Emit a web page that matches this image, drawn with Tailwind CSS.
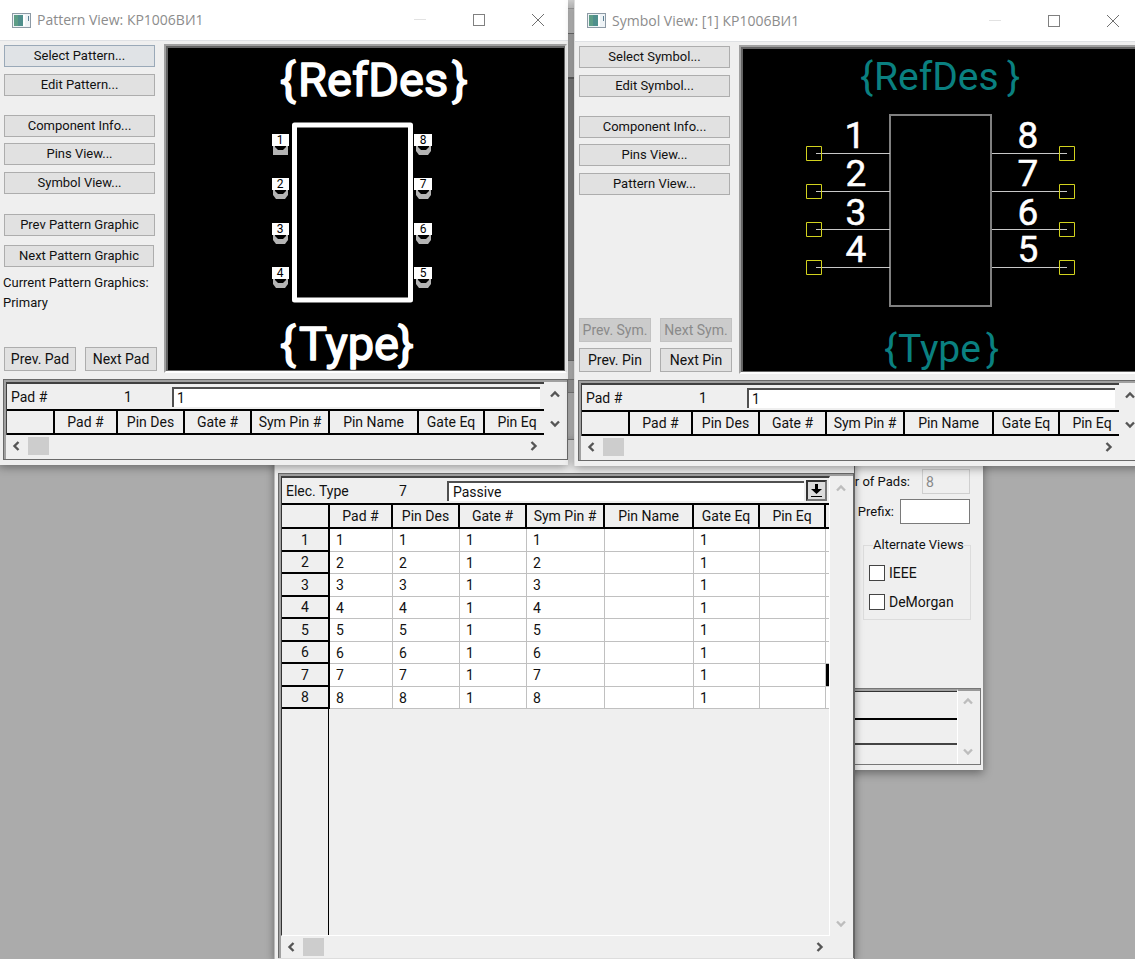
<!DOCTYPE html>
<html lang="en">
<head>
<meta charset="utf-8">
<title>Library Executive</title>
<script src="https://cdn.jsdelivr.net/npm/@tailwindcss/browser@4"></script>
</head>
<body class="relative h-screen overflow-hidden bg-[#ababab] font-['Roboto','Liberation_Sans',sans-serif] text-sm leading-5 text-[#111]">

<svg class="hidden" aria-hidden="true">
  <symbol id="up" viewBox="0 0 10 8"><path d="M1 6.500 5 2.500 9 6.500" fill="none" stroke="currentColor" stroke-width="2.400"/></symbol>
  <symbol id="down" viewBox="0 0 10 8"><path d="M1 1.500 5 5.500 9 1.500" fill="none" stroke="currentColor" stroke-width="2.400"/></symbol>
  <symbol id="left" viewBox="0 0 8 10"><path d="M6.500 1 2.500 5 6.500 9" fill="none" stroke="currentColor" stroke-width="2.400"/></symbol>
  <symbol id="right" viewBox="0 0 8 10"><path d="M1.500 1 5.500 5 1.500 9" fill="none" stroke="currentColor" stroke-width="2.400"/></symbol>
  <symbol id="app" viewBox="0 0 19 15">
    <rect x="0.500" y="0.500" width="18" height="14" fill="#eef3f6" stroke="#8d9aa5"/>
    <rect x="2" y="2" width="9" height="11" fill="#4f8f8c"/><rect x="2" y="2" width="4" height="11" fill="#5d9d86"/>
    <path d="M12 2v11" stroke="#fff" stroke-width="2"/><path d="M16.500 3v5" stroke="#5b7f93"/>
  </symbol>
  <symbol id="min" viewBox="0 0 12 12"><path d="M0 5.500h12" stroke="#e2e2e2"/></symbol>
  <symbol id="max" viewBox="0 0 12 12"><rect x="0.500" y="0.500" width="11" height="11" fill="none" stroke="#808080"/></symbol>
  <symbol id="close" viewBox="0 0 12 12"><path d="M0 0 12 12M12 0 0 12" stroke="#707070"/></symbol>
</svg>

<!-- Edge of the main window, seen between the two viewers -->
<div class="absolute left-[560px] top-0 flex h-[466px] w-5 flex-col bg-[#c8c8c8]">
  <div class="h-[9px] border-b border-[#b0b0b0] bg-[#dcdcdc]"></div>
  <div class="h-[25px] border-b border-[#777] bg-[#cfcfcf]"></div>
  <div class="h-[45px] border-b-2 border-[#666] bg-[#b8b8b8]"></div>
  <div class="h-[282px] border-b border-[#777] bg-[#8a8a8a]"></div>
  <div class="h-[19px] border-b border-[#888] bg-[#c6c6c6]"></div>
  <div class="h-[13px] border-b border-[#888] bg-[#aaa]"></div>
  <div class="h-[47px] border-b border-[#999] bg-[#c8c8c8]"></div>
  <div class="flex-1 bg-[#b4b4b4]"></div>
</div>

<!-- Component information -->
<section class="absolute left-[580px] top-[440px] w-[403px] bg-[#efefef] pb-[5px] pr-0.5 pt-[29px] shadow-[0_3px_9px_rgba(0,0,0,0.4)]">
  <div class="flex flex-col items-end gap-[5px] pr-[11px] text-[13px]">
    <div class="flex items-center gap-3"><label for="pads">Number of Pads:</label><input id="pads" disabled value="8" class="h-[25px] w-12 border border-[#cfcfcf] bg-[#efefef] px-[3px] text-sm text-[#888]"></div>
    <div class="flex items-center gap-1.5"><label for="prefix">RefDes Prefix:</label><input id="prefix" class="h-[25px] w-[70px] border border-[#7a7a7a] bg-white px-1"></div>
  </div>
  <fieldset class="ml-auto mr-2.5 mt-[11px] h-[85px] w-[108px] border border-[#dcdcdc] pl-[5px]">
    <legend class="ml-1 whitespace-nowrap text-[13px]">Alternate Views</legend>
    <div class="flex flex-col gap-[9px] pt-2">
      <label class="flex h-5 items-center gap-1"><input type="checkbox" class="size-4 appearance-none border border-[#444] bg-white">IEEE</label>
      <label class="flex h-5 items-center gap-1"><input type="checkbox" class="size-4 appearance-none border border-[#444] bg-white">DeMorgan</label>
    </div>
  </fieldset>
  <div class="mt-[68px] flex h-[77px] border border-[#777]">
    <div class="flex flex-1 flex-col border-t-2 border-[#a0a0a0]">
      <div class="h-[29px] border-b-2 border-t border-b-black border-t-[#333]"></div>
      <div class="h-[25px] border-b-2 border-[#444]"></div>
    </div>
    <div class="flex w-[23px] flex-col items-center justify-between border-l border-t-2 border-l-white border-t-[#999] pb-2 pr-0.5 pt-1.5 text-[#bdbdbd]">
      <svg class="h-2 w-2.5"><use href="#up"/></svg><svg class="h-2 w-2.5"><use href="#down"/></svg>
    </div>
  </div>
</section>

<!-- Pins view -->
<section class="absolute bottom-0 left-[274px] top-[440px] flex w-[581px] flex-col border-l border-r border-l-[#bbb] border-r-[#666] bg-[#efefef] pl-[3px] pt-[33px] shadow-[0_2px_8px_rgba(0,0,0,0.4)]">
  <div class="flex flex-1 border-l border-r border-t border-[#696969]">
    <div class="flex min-w-0 flex-1 border-l-2 border-t-2 border-[#a0a0a0]">
      <div class="flex min-w-0 flex-1 flex-col">
        <div class="flex min-h-0 flex-1 flex-col border-b border-l border-r border-t-2 border-b-white border-l-[#333] border-r-white border-t-[#404040]">
          <div class="flex h-[25px] items-center pl-1">
            <label for="etype" class="w-[113px]">Elec. Type</label><span class="w-12">7</span>
            <input id="etype" value="Passive" class="h-5 min-w-0 flex-1 border-l-2 border-t-2 border-[#505050] bg-white px-1">
            <button aria-label="Open list" class="ml-0.5 mr-0.5 flex size-[21px] items-center justify-center border-2 border-b-[#777] border-l-[#333] border-r-[#777] border-t-[#333] bg-[#dcdcdc]">
              <svg class="size-[15px]" viewBox="0 0 15 15"><path d="M6 1h3v5h4L7.500 11 2 6h4z" fill="#000"/><path d="M2 13.500h11" stroke="#000"/></svg>
            </button>
          </div>
          <div class="overflow-hidden">
          <table class="w-[622px] table-fixed border-separate border-spacing-0 text-left">
            <colgroup><col class="w-12"><col class="w-[63px]"><col class="w-[67px]"><col class="w-[67px]"><col class="w-[78px]"><col class="w-[89px]"><col class="w-[66px]"><col class="w-[66px]"><col class="w-[78px]"></colgroup>
            <thead class="text-center [&_th]:h-[26px] [&_th]:border-b-2 [&_th]:border-r-2 [&_th]:border-t-2 [&_th]:border-black [&_th]:p-0 [&_th]:font-normal">
              <tr><th></th><th>Pad #</th><th>Pin Des</th><th>Gate #</th><th>Sym Pin #</th><th>Pin Name</th><th>Gate Eq</th><th>Pin Eq</th><th></th></tr>
            </thead>
            <tbody class="[&_td]:border-b [&_td]:border-r [&_td]:border-[#c0c0c0] [&_td]:bg-white [&_td]:py-0 [&_td]:pl-1.5 [&_th]:border-b-2 [&_th]:border-r-2 [&_th]:border-black [&_th]:p-0 [&_th]:text-center [&_th]:font-normal [&_tr]:leading-[20px] [&_tr:nth-child(even)]:h-[22px] [&_tr:nth-child(odd)]:h-[23px]">
              <tr><th>1</th><td>1</td><td>1</td><td>1</td><td>1</td><td></td><td>1</td><td></td><td></td></tr>
              <tr><th>2</th><td>2</td><td>2</td><td>1</td><td>2</td><td></td><td>1</td><td></td><td></td></tr>
              <tr><th>3</th><td>3</td><td>3</td><td>1</td><td>3</td><td></td><td>1</td><td></td><td></td></tr>
              <tr><th>4</th><td>4</td><td>4</td><td>1</td><td>4</td><td></td><td>1</td><td></td><td></td></tr>
              <tr><th>5</th><td>5</td><td>5</td><td>1</td><td>5</td><td></td><td>1</td><td></td><td></td></tr>
              <tr><th>6</th><td>6</td><td>6</td><td>1</td><td>6</td><td></td><td>1</td><td></td><td></td></tr>
              <tr><th>7</th><td>7</td><td>7</td><td>1</td><td>7</td><td></td><td>1</td><td></td><td class="bg-black!"></td></tr>
              <tr><th>8</th><td>8</td><td>8</td><td>1</td><td>8</td><td></td><td>1</td><td></td><td></td></tr>
            </tbody>
          </table>
          </div>
          <div class="w-[47px] flex-1 border-r border-black"></div>
        </div>
        <div class="flex h-[22px] items-center justify-between pl-1.5 pr-1.5 text-[#555]">
          <div class="flex items-center gap-2"><svg class="h-2.5 w-2"><use href="#left"/></svg><div class="h-[18px] w-[21px] bg-[#cdcdcd]"></div></div>
          <svg class="h-2.5 w-2"><use href="#right"/></svg>
        </div>
      </div>
      <div class="flex w-[23px] flex-col items-center justify-between pb-[30px] pt-2 pr-0.5 text-[#bdbdbd]">
        <svg class="h-2 w-2.5"><use href="#up"/></svg><svg class="h-2 w-2.5"><use href="#down"/></svg>
      </div>
    </div>
  </div>
  <div class="h-px bg-[#ddd]"></div>
</section>

<!-- Pattern view -->
<section class="absolute -left-px top-0 w-[569px] border-l border-[#bbb] bg-[#efefef] shadow-[0_2px_9px_rgba(0,0,0,0.4)]">
  <header class="flex h-[41px] items-center border-b border-[#dfe1e4] bg-white pl-3 pr-6 font-['Open_Sans','Noto_Sans',sans-serif] text-sm text-[#8c8c8c]">
    <svg class="mr-1.5 h-[15px] w-[19px]"><use href="#app"/></svg>
    <h1 class="flex-1">Pattern View: КР1006ВИ1</h1>
    <div class="flex gap-[47px]">
      <button aria-label="Minimize"><svg class="size-3"><use href="#min"/></svg></button>
      <button aria-label="Maximize"><svg class="size-3"><use href="#max"/></svg></button>
      <button aria-label="Close"><svg class="size-3"><use href="#close"/></svg></button>
    </div>
  </header>
  <div class="flex h-[338px]">
    <div class="flex w-[164px] flex-col pb-2 pl-1 pt-1">
      <div class="flex w-[151px] flex-col gap-[7px] text-[13px] [&_button]:h-[22px] [&_button]:border [&_button]:border-[#adadad] [&_button]:bg-[#e1e1e1]">
        <button class="border-[#9aa9b8]! bg-[#e0e3e6]!">Select Pattern...</button>
        <button>Edit Pattern...</button>
        <button class="mt-3">Component Info...</button>
        <button class="-mt-px">Pins View...</button>
        <button>Symbol View...</button>
        <button class="mt-[13px]">Prev Pattern Graphic</button>
        <button class="mt-0.5 w-[150px]">Next Pattern Graphic</button>
      </div>
      <p class="-ml-px mt-1.5 whitespace-nowrap text-[13px]">Current Pattern Graphics:<br>Primary</p>
      <div class="mt-auto flex gap-[9px] [&_button]:h-6 [&_button]:w-[72px] [&_button]:border [&_button]:border-[#adadad] [&_button]:bg-[#e1e1e1]">
        <button>Prev. Pad</button><button>Next Pad</button>
      </div>
    </div>
    <div class="mb-[6px] mr-px mt-[3px] flex flex-1 border-b-2 border-l-2 border-r-2 border-t-2 border-b-white border-l-[#a0a0a0] border-r-[#e3e3e3] border-t-[#a0a0a0]">
      <div class="flex-1 border-b border-l-2 border-r border-t-2 border-[#646464] bg-black">
        <svg class="block size-full" viewBox="168 48 396 322" font-family="Roboto, 'Liberation Sans', sans-serif">
          <g fill="#fff" stroke="#fff" stroke-width="1.500" stroke-linejoin="round" font-size="47">
            <text x="280" y="96">{</text><text x="298" y="96">RefDes</text><text x="452" y="96">}</text>
            <text x="280" y="360">{</text><text x="299" y="360">Type</text><text x="398" y="360">}</text>
          </g>
          <rect x="294.500" y="125" width="116" height="175" fill="none" stroke="#fff" stroke-width="5" stroke-linejoin="round"/>
          <g fill="#b4b4b4">
            <path d="M273 146h15v9h-15z"/>
            <path id="pad" d="M273 190h15v5l-3 4h-9l-3-4z"/>
            <use href="#pad" y="45"/><use href="#pad" y="89"/>
            <use href="#pad" x="143" y="-44"/><use href="#pad" x="143"/><use href="#pad" x="143" y="45"/><use href="#pad" x="143" y="89"/>
          </g>
          <g fill="#000">
            <path id="hole" d="M275 146h11v1l-3 3h-5l-3-3z"/>
            <use href="#hole" y="44"/><use href="#hole" y="89"/><use href="#hole" y="133"/>
            <use href="#hole" x="143"/><use href="#hole" x="143" y="44"/><use href="#hole" x="143" y="89"/><use href="#hole" x="143" y="133"/>
          </g>
          <path fill="#fff" d="M272 134h17v12h-17zM272 178h17v12h-17zM272 223h17v12h-17zM272 267h17v12h-17zM414 134h18v12h-18zM414 178h18v12h-18zM414 223h18v12h-18zM414 267h18v12h-18z"/>
          <g font-size="12" fill="#000" text-anchor="middle">
            <text x="280" y="144">1</text><text x="280" y="188">2</text><text x="280" y="233">3</text><text x="280" y="277">4</text>
            <text x="423" y="144">8</text><text x="423" y="188">7</text><text x="423" y="233">6</text><text x="423" y="277">5</text>
          </g>
        </svg>
      </div>
    </div>
  </div>
  <div class="mb-[5px] ml-[3px] flex border border-[#696969]">
    <div class="flex min-w-0 flex-1 border-l-2 border-t-2 border-[#a0a0a0]">
      <div class="min-w-0 flex-1">
        <div class="border-l border-t-2 border-[#404040]">
          <div class="flex h-[25px] items-center pl-1 pr-1">
            <label for="pada" class="w-[113px]">Pad #</label><span class="w-12">1</span>
            <input id="pada" value="1" class="h-5 min-w-0 flex-1 border-l-2 border-t-2 border-[#505050] bg-white px-[3px]">
          </div>
          <div class="overflow-hidden">
          <table class="w-[544px] table-fixed border-separate border-spacing-0 text-center">
            <colgroup><col class="w-12"><col class="w-[63px]"><col class="w-[67px]"><col class="w-[67px]"><col class="w-[78px]"><col class="w-[89px]"><col class="w-[66px]"><col class="w-[66px]"></colgroup>
            <thead class="[&_th]:h-[26px] [&_th]:border-b-2 [&_th]:border-r-2 [&_th]:border-t-2 [&_th]:border-black [&_th]:p-0 [&_th]:font-normal">
              <tr><th></th><th>Pad #</th><th>Pin Des</th><th>Gate #</th><th>Sym Pin #</th><th>Pin Name</th><th>Gate Eq</th><th>Pin Eq</th></tr>
            </thead>
          </table>
          </div>
        </div>
        <div class="flex h-6 items-center justify-between pb-0.5 pl-1.5 pr-1.5 text-[#555]">
          <div class="flex items-center gap-2"><svg class="h-2.5 w-2"><use href="#left"/></svg><div class="h-[18px] w-[21px] bg-[#cdcdcd]"></div></div>
          <svg class="h-2.5 w-2"><use href="#right"/></svg>
        </div>
      </div>
      <div class="flex w-[23px] flex-col items-center gap-[22px] pr-0.5 pt-2 text-[#555]">
        <svg class="h-2 w-2.5"><use href="#up"/></svg><svg class="h-2 w-2.5"><use href="#down"/></svg>
      </div>
    </div>
  </div>
</section>

<!-- Symbol view -->
<section class="absolute left-[574px] top-0 w-[569px] border-l border-[#ddd] bg-[#efefef] shadow-[0_2px_9px_rgba(0,0,0,0.4)]">
  <header class="flex h-[42px] items-center border-b border-[#dfe1e4] bg-white pl-3 pr-6 font-['Open_Sans','Noto_Sans',sans-serif] text-sm text-[#8c8c8c]">
    <svg class="mr-1.5 h-[15px] w-[19px]"><use href="#app"/></svg>
    <h1 class="flex-1">Symbol View: [1] КР1006ВИ1</h1>
    <div class="flex gap-[47px]">
      <button aria-label="Minimize"><svg class="size-3"><use href="#min"/></svg></button>
      <button aria-label="Maximize"><svg class="size-3"><use href="#max"/></svg></button>
      <button aria-label="Close"><svg class="size-3"><use href="#close"/></svg></button>
    </div>
  </header>
  <div class="flex h-[338px]">
    <div class="flex w-[164px] flex-col pb-2 pl-1 pt-1">
      <div class="flex w-[151px] flex-col gap-[7px] text-[13px] [&_button]:h-[22px] [&_button]:border [&_button]:border-[#adadad] [&_button]:bg-[#e1e1e1]">
        <button>Select Symbol...</button>
        <button>Edit Symbol...</button>
        <button class="mt-3">Component Info...</button>
        <button class="-mt-px">Pins View...</button>
        <button>Pattern View...</button>
      </div>
      <div class="mt-auto grid grid-cols-[72px_72px] gap-x-[9px] gap-y-1.5 [&_button]:h-6 [&_button]:border [&_button]:border-[#adadad] [&_button]:bg-[#e1e1e1]">
        <button disabled class="border-[#c2c2c2]! bg-[#cccccc]! text-[#8a8a8a]">Prev. Sym.</button><button disabled class="border-[#c2c2c2]! bg-[#cccccc]! text-[#8a8a8a]">Next Sym.</button>
        <button>Prev. Pin</button><button>Next Pin</button>
      </div>
    </div>
    <div class="mb-[6px] mr-px mt-[3px] flex flex-1 border-b-2 border-l-2 border-r-2 border-t-2 border-b-white border-l-[#a0a0a0] border-r-[#e3e3e3] border-t-[#a0a0a0]">
      <div class="flex-1 border-b border-l-2 border-r border-t-2 border-[#646464] bg-black">
        <svg class="block size-full" viewBox="743 49 396 322" font-family="Roboto, 'Liberation Sans', sans-serif">
          <g fill="#0a8080" font-size="39">
            <text x="860" y="90">{</text><text x="874" y="90">RefDes</text><text x="1007" y="90">}</text>
            <text x="884" y="362">{</text><text x="898" y="362">Type</text><text x="986" y="362">}</text>
          </g>
          <g fill="#fff" stroke="#fff" stroke-width="0.500" font-size="37" text-anchor="middle">
            <text x="855" y="148">1</text><text x="856" y="186">2</text><text x="856" y="225">3</text><text x="856" y="262">4</text>
            <text x="1028" y="148">8</text><text x="1028" y="186">7</text><text x="1028" y="225">6</text><text x="1028" y="262">5</text>
          </g>
          <rect x="890" y="115" width="101" height="191" fill="none" stroke="#808080" stroke-width="2"/>
          <path d="M816 153.500h74M816 191.500h74M816 229.500h74M816 267.500h74M992 153.500h75M992 191.500h75M992 229.500h75M992 267.500h75" stroke="#c8c8c8"/>
          <path d="M806.500 146.500h15v14h-15zM806.500 184.500h15v14h-15zM806.500 222.500h15v14h-15zM806.500 260.500h15v14h-15zM1059.500 146.500h15v14h-15zM1059.500 184.500h15v14h-15zM1059.500 222.500h15v14h-15zM1059.500 260.500h15v14h-15z" fill="none" stroke="#d2d21e"/>
        </svg>
      </div>
    </div>
  </div>
  <div class="mb-[5px] ml-[3px] flex border border-[#696969]">
    <div class="flex min-w-0 flex-1 border-l-2 border-t-2 border-[#a0a0a0]">
      <div class="min-w-0 flex-1">
        <div class="border-l border-t-2 border-[#404040]">
          <div class="flex h-[25px] items-center pl-1 pr-1">
            <label for="padb" class="w-[113px]">Pad #</label><span class="w-12">1</span>
            <input id="padb" value="1" class="h-5 min-w-0 flex-1 border-l-2 border-t-2 border-[#505050] bg-white px-[3px]">
          </div>
          <div class="overflow-hidden">
          <table class="w-[544px] table-fixed border-separate border-spacing-0 text-center">
            <colgroup><col class="w-12"><col class="w-[63px]"><col class="w-[67px]"><col class="w-[67px]"><col class="w-[78px]"><col class="w-[89px]"><col class="w-[66px]"><col class="w-[66px]"></colgroup>
            <thead class="[&_th]:h-[26px] [&_th]:border-b-2 [&_th]:border-r-2 [&_th]:border-t-2 [&_th]:border-black [&_th]:p-0 [&_th]:font-normal">
              <tr><th></th><th>Pad #</th><th>Pin Des</th><th>Gate #</th><th>Sym Pin #</th><th>Pin Name</th><th>Gate Eq</th><th>Pin Eq</th></tr>
            </thead>
          </table>
          </div>
        </div>
        <div class="flex h-6 items-center justify-between pb-0.5 pl-1.5 pr-1.5 text-[#555]">
          <div class="flex items-center gap-2"><svg class="h-2.5 w-2"><use href="#left"/></svg><div class="h-[18px] w-[21px] bg-[#cdcdcd]"></div></div>
          <svg class="h-2.5 w-2"><use href="#right"/></svg>
        </div>
      </div>
      <div class="flex w-[23px] flex-col items-center gap-[22px] pr-0.5 pt-2 text-[#555]">
        <svg class="h-2 w-2.5"><use href="#up"/></svg><svg class="h-2 w-2.5"><use href="#down"/></svg>
      </div>
    </div>
  </div>
</section>
</body>
</html>
